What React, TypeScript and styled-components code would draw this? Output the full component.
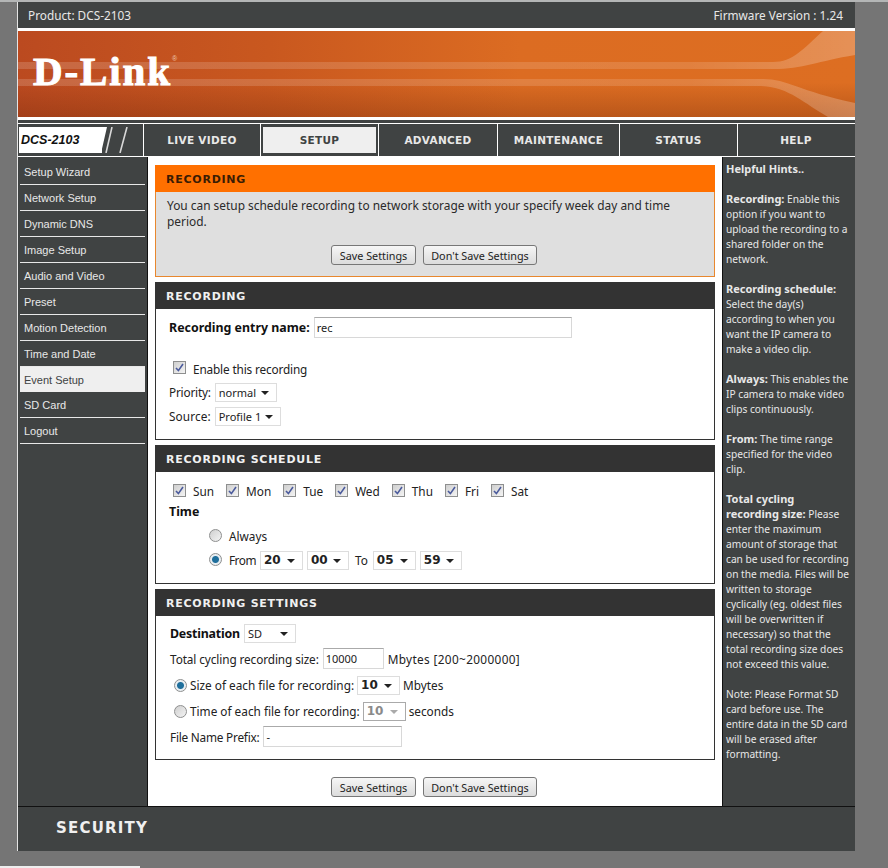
import styled, { createGlobalStyle } from "styled-components";

const GlobalStyle = createGlobalStyle`
  html, body {
    margin: 0;
    padding: 0;
    background: #757575;
  }
  * {
    box-sizing: border-box;
  }
`;

const bodyFont = `"Noto Sans", "DejaVu Sans", sans-serif`;
const headFont = `"DejaVu Sans", Verdana, sans-serif`;

const tabs = ["LIVE VIDEO", "SETUP", "ADVANCED", "MAINTENANCE", "STATUS", "HELP"];
const tabWidths = [117, 118, 119, 122, 118, 116];
const menu = [
  "Setup Wizard",
  "Network Setup",
  "Dynamic DNS",
  "Image Setup",
  "Audio and Video",
  "Preset",
  "Motion Detection",
  "Time and Date",
  "Event Setup",
  "SD Card",
  "Logout",
];
const days = ["Sun", "Mon", "Tue", "Wed", "Thu", "Fri", "Sat"];

const Checkbox = () => (
  <CheckBox>
    <svg width="9" height="9" viewBox="0 0 9 9">
      <path d="M1 5 L3.4 7.6 L8 1" fill="none" stroke="#4a5a9c" strokeWidth="1.6" />
    </svg>
  </CheckBox>
);

const Select = ({ value, bold, disabled, width }: { value: string; bold?: boolean; disabled?: boolean; width: number }) => (
  <SelectBox $bold={bold} $disabled={disabled} $width={width}>
    {value}
  </SelectBox>
);

const Buttons = () => (
  <ButtonRow>
    <Button $width={85}>Save Settings</Button>
    <Button $width={114}>Don't Save Settings</Button>
  </ButtonRow>
);

const App = () => {
  return (
    <>
      <GlobalStyle />
      <Page>
        <Frame>
          <TopBar>
            <span>Product: DCS-2103</span>
            <span>Firmware Version : 1.24</span>
          </TopBar>
          <Banner>
            <BannerArt viewBox="0 0 837 86" preserveAspectRatio="none">
              <defs>
                <linearGradient id="fade" x1="0" x2="1" y1="0" y2="0">
                  <stop offset="0" stopColor="#fff" stopOpacity="0.16" />
                  <stop offset="0.8" stopColor="#fff" stopOpacity="0.13" />
                  <stop offset="1" stopColor="#fff" stopOpacity="0.24" />
                </linearGradient>
                <linearGradient id="shade" x1="0" x2="0" y1="0" y2="1">
                  <stop offset="0.6" stopColor="#6a2408" stopOpacity="0" />
                  <stop offset="1" stopColor="#6a2408" stopOpacity="0.3" />
                </linearGradient>
              </defs>
              <rect width="837" height="86" fill="url(#shade)" />
              <path d="M0 31 H755 C775 31 785 18 805 0 H837 V24 C800 30 785 38 755 38 H0 Z" fill="url(#fade)" />
              <path d="M0 48 H745 C770 48 780 60 837 72 V86 H810 C785 72 770 55 740 55 H0 Z" fill="url(#fade)" />
            </BannerArt>
            <Logo>
              D-Link<sup>®</sup>
            </Logo>
          </Banner>
          <Divider />
          <Nav>
            <ModelCell>
              <ModelName>DCS-2103</ModelName>
              <svg width="28" height="26" viewBox="0 0 28 26">
                <path d="M5 0 L-1 26 H0 V0 Z" fill="#fff" />
                <path d="M10 0 L4 26 M25 0 L18 26" stroke="#d8d8d8" strokeWidth="1.6" fill="none" />
              </svg>
            </ModelCell>
            {tabs.map((t, i) => (
              <Tab key={t} style={{ width: tabWidths[i] }} $active={t === "SETUP"}>
                <span>{t}</span>
              </Tab>
            ))}
          </Nav>
          <Body>
            <Sidebar>
              {menu.map((m) => (
                <MenuItem key={m} $active={m === "Event Setup"}>
                  {m}
                </MenuItem>
              ))}
            </Sidebar>
            <Main>
              <IntroPanel>
                <IntroHead>RECORDING</IntroHead>
                <IntroText>
                  You can setup schedule recording to network storage with your specify week day and time
                  <br />
                  period.
                </IntroText>
                <Buttons />
              </IntroPanel>

              <Panel>
                <PanelHead>RECORDING</PanelHead>
                <EntryBody>
                  <Row>
                    <Bold>Recording entry name:</Bold>
                    <TextInput $width={258} defaultValue="rec" />
                  </Row>
                  <EnableRow>
                    <Checkbox />
                    <Label $spacing={-0.15}>Enable this recording</Label>
                  </EnableRow>
                  <Row>
                    <Label $spacing={-0.2}>Priority:</Label>
                    <Select value="normal" width={62} />
                  </Row>
                  <Row>
                    <Label $spacing={0.1}>Source:</Label>
                    <Select value="Profile 1" width={66} />
                  </Row>
                </EntryBody>
              </Panel>

              <Panel>
                <PanelHead>RECORDING SCHEDULE</PanelHead>
                <ScheduleBody>
                  <DayRow>
                    {days.map((d) => (
                      <Day key={d}>
                        <Checkbox />
                        <span>{d}</span>
                      </Day>
                    ))}
                  </DayRow>
                  <TimeLabel>Time</TimeLabel>
                  <TimeRow>
                    <TimeRadio />
                    <span>Always</span>
                  </TimeRow>
                  <TimeRow>
                    <TimeRadio $on />
                    <Label $spacing={-0.5}>From</Label>
                    <Select value="20" bold width={43} />
                    <Select value="00" bold width={42} />
                    <ToLabel>To</ToLabel>
                    <Select value="05" bold width={43} />
                    <Select value="59" bold width={42} />
                  </TimeRow>
                </ScheduleBody>
              </Panel>

              <Panel>
                <PanelHead>RECORDING SETTINGS</PanelHead>
                <SettingsBody>
                  <SettingsRow>
                    <Bold $spacing={-0.2}>Destination</Bold>
                    <Select value="SD" width={52} />
                  </SettingsRow>
                  <SettingsRow>
                    <Label $spacing={-0.1}>Total cycling recording size:</Label>
                    <TextInput $width={61} defaultValue="10000" />
                    <Label $spacing={0.35}>Mbytes [200~2000000]</Label>
                  </SettingsRow>
                  <RadioRow>
                    <Radio $on />
                    <span>Size of each file for recording:</span>
                    <Select value="10" bold width={43} />
                    <span>Mbytes</span>
                  </RadioRow>
                  <RadioRow>
                    <Radio />
                    <span>Time of each file for recording:</span>
                    <Select value="10" bold disabled width={43} />
                    <span>seconds</span>
                  </RadioRow>
                  <SettingsRow>
                    <Label $spacing={-0.22}>File Name Prefix:</Label>
                    <TextInput $width={139} defaultValue="-" />
                  </SettingsRow>
                </SettingsBody>
              </Panel>

              <BottomButtons>
                <Buttons />
              </BottomButtons>
            </Main>
            <Hints>
              <strong>Helpful Hints..</strong>
              <br />
              <br />
              <strong>Recording:</strong> Enable this
              <br />
              option if you want to
              <br />
              upload the recording to a
              <br />
              shared folder on the
              <br />
              network.
              <br />
              <br />
              <strong>Recording schedule:</strong>
              <br />
              Select the day(s)
              <br />
              according to when you
              <br />
              want the IP camera to
              <br />
              make a video clip.
              <br />
              <br />
              <strong>Always:</strong> This enables the
              <br />
              IP camera to make video
              <br />
              clips continuously.
              <br />
              <br />
              <strong>From:</strong> The time range
              <br />
              specified for the video
              <br />
              clip.
              <br />
              <br />
              <strong>Total cycling</strong>
              <br />
              <strong>recording size:</strong> Please
              <br />
              enter the maximum
              <br />
              amount of storage that
              <br />
              can be used for recording
              <br />
              on the media. Files will be
              <br />
              written to storage
              <br />
              cyclically (eg. oldest files
              <br />
              will be overwritten if
              <br />
              necessary) so that the
              <br />
              total recording size does
              <br />
              not exceed this value.
              <br />
              <br />
              Note: Please Format SD
              <br />
              card before use. The
              <br />
              entire data in the SD card
              <br />
              will be erased after
              <br />
              formatting.
            </Hints>
          </Body>
          <Footer>SECURITY</Footer>
        </Frame>
        <BottomStrip />
      </Page>
    </>
  );
};

const Page = styled.div`
  width: 888px;
  height: 868px;
  background: #757575;
  border-top: 2px solid #b4b6b6;
  overflow: hidden;
  font-family: ${bodyFont};
  font-size: 11.8px;
  color: #222;
`;

const Frame = styled.div`
  width: 838px;
  margin-left: 17px;
  background: #fff;
  border-left: 1px solid #e4e4e4;
`;

const TopBar = styled.div`
  height: 26px;
  padding: 0 12px 0 10px;
  display: flex;
  align-items: center;
  justify-content: space-between;
  background: #404343;
  color: #e8e8e8;
  font-size: 11.8px;
`;

const Banner = styled.div`
  position: relative;
  height: 86px;
  margin-top: 3px;
  padding: 18px 0 0 15px;
  background: linear-gradient(90deg, #bb4a20 0%, #c9581f 30%, #dc6c22 60%, #dd6e22 100%);
`;

const BannerArt = styled.svg`
  position: absolute;
  inset: 0;
  width: 100%;
  height: 100%;
`;

const Logo = styled.div`
  position: relative;
  font-family: "Liberation Serif", serif;
  font-weight: 700;
  font-size: 41px;
  line-height: 44px;
  letter-spacing: 1.9px;
  color: #fff;
  -webkit-text-stroke: 1px #fff;

  sup {
    font-family: "Liberation Sans", sans-serif;
    font-size: 7px;
    font-weight: 400;
    letter-spacing: 0;
    vertical-align: 24px;
    line-height: 0;
    -webkit-text-stroke: 0;
    color: #f0c9ad;
  }
`;

const Divider = styled.div`
  height: 3px;
  margin-top: 3px;
  background: #404343;
`;

const Nav = styled.div`
  display: flex;
  height: 34px;
  border-top: 1px solid #fff;
  border-bottom: 1px solid #fff;
  background: #404343;
`;

const ModelCell = styled.div`
  width: 126px;
  flex: none;
  display: flex;
  align-items: center;
  padding: 0 0 0 1px;
  border-right: 1px solid #fff;

  svg {
    flex: none;
  }
`;

const ModelName = styled.div`
  width: 83px;
  height: 26px;
  padding-left: 2px;
  background: #fff;
  color: #111;
  font-family: "Liberation Sans", Arial, sans-serif;
  font-weight: 700;
  font-style: italic;
  font-size: 12.5px;
  line-height: 26px;
`;

const Tab = styled.div<{ $active?: boolean }>`
  flex: none;
  display: flex;
  align-items: center;
  justify-content: center;
  border-right: 1px solid #fff;
  font-family: ${headFont};
  font-weight: 700;
  font-size: 10.5px;
  letter-spacing: 0.3px;
  color: ${(p) => (p.$active ? "#404343" : "#e8e8e8")};
  padding: 0 2px;

  span {
    display: flex;
    align-items: center;
    justify-content: center;
    width: 100%;
    height: 26px;
    background: ${(p) => (p.$active ? "#efefef" : "transparent")};
  }

  &:last-child {
    border-right: none;
  }
`;

const Body = styled.div`
  display: flex;
  height: 650px;
  border-bottom: 1px solid #111;
`;

const Sidebar = styled.div`
  width: 130px;
  flex: none;
  padding: 2px 2px 0 2px;
  background: #404343;
  border-right: 1px solid #111;
`;

const MenuItem = styled.div<{ $active?: boolean }>`
  height: ${(p) => (p.$active ? "25px" : "26px")};
  padding-left: 4px;
  line-height: 26px;
  font-family: "Liberation Sans", Arial, sans-serif;
  font-size: 11px;
  color: ${(p) => (p.$active ? "#404343" : "#e8e8e8")};
  background: ${(p) => (p.$active ? "#efefef" : "transparent")};
  border-bottom: ${(p) => (p.$active ? "none" : "1px solid #e8e8e8")};
`;

const Main = styled.div`
  width: 574px;
  flex: none;
  padding: 8px 7px 0 7px;
  background: #fff;
  display: flex;
  flex-direction: column;
`;

const IntroPanel = styled.div`
  height: 112px;
  background: #dfdfdf;
  border: 1px solid #e8872e;
  border-top: none;
`;

const IntroHead = styled.div`
  height: 27px;
  margin: 0 -1px;
  padding-left: 11px;
  background: #ff7000;
  color: #3a1c04;
  font-family: ${headFont};
  font-weight: 700;
  font-size: 11px;
  letter-spacing: 0.75px;
  line-height: 30px;
`;

const IntroText = styled.div`
  height: 53px;
  padding: 5px 0 0 11px;
  line-height: 16px;
  font-size: 11.9px;
  color: #2a2a2a;
`;

const ButtonRow = styled.div`
  display: flex;
  justify-content: center;
  gap: 7px;
  padding-right: 2px;
`;

const Button = styled.button<{ $width: number }>`
  width: ${(p) => p.$width}px;
  height: 20px;
  padding: 0;
  border: 1px solid #777;
  border-radius: 3px;
  background: linear-gradient(#f6f6f6, #dcdcdc);
  font-family: ${bodyFont};
  font-size: 10.8px;
  color: #222;
`;

const Panel = styled.div`
  margin-top: 5px;
  border: 1px solid #333;
  border-top: none;
  background: #fff;
`;

const PanelHead = styled.div`
  height: 27px;
  margin: 0 -1px;
  padding-left: 11px;
  background: #333;
  color: #f0f0f0;
  font-family: ${headFont};
  font-weight: 700;
  font-size: 11px;
  letter-spacing: 0.75px;
  line-height: 30px;
`;

const Row = styled.div`
  display: flex;
  align-items: center;
  gap: 4px;
  height: 24px;
`;

const Label = styled.span<{ $spacing?: number }>`
  letter-spacing: ${(p) => p.$spacing ?? 0}px;
`;

const Bold = styled(Label)`
  font-weight: 700;
  font-size: 12.4px;
  color: #111;
`;

const ToLabel = styled.span`
  padding: 0 1px 0 2px;
`;

const EntryBody = styled.div`
  height: 130px;
  padding: 6px 0 0 13px;
`;

const EnableRow = styled(Row)`
  margin-top: 18px;
  height: 23px;
  padding-left: 4px;
  gap: 7px;
`;

const ScheduleBody = styled.div`
  height: 111px;
  padding: 7px 0 0 13px;
`;

const DayRow = styled(Row)`
  gap: 12px;
  padding-left: 4px;
`;

const Day = styled.div`
  display: flex;
  align-items: center;
  gap: 7px;
`;

const TimeLabel = styled(Bold)`
  display: block;
  height: 21px;
  line-height: 18px;
`;

const TimeRow = styled(Row)`
  padding-left: 40px;
  gap: 4px;
`;

const SettingsBody = styled.div`
  height: 143px;
  padding: 5px 0 0 14px;
`;

const SettingsRow = styled(Row)`
  height: 25px;
`;

const RadioRow = styled(Row)`
  padding-left: 4px;
  height: 26px;
  gap: 3px;

  &:nth-child(3) {
    margin-top: 1px;
  }
`;

const CheckBox = styled.span`
  flex: none;
  width: 13px;
  height: 13px;
  margin-bottom: 2px;
  display: inline-flex;
  align-items: center;
  justify-content: center;
  border: 1px solid #8e8f8f;
  background: linear-gradient(135deg, #cfcfcf, #f4f4f4);
`;

const Radio = styled.span<{ $on?: boolean }>`
  flex: none;
  width: 13px;
  height: 13px;
  border-radius: 50%;
  border: 1px solid #8e8f8f;
  background: ${(p) =>
    p.$on
      ? "radial-gradient(circle, #1f6f9c 0 3px, #e8eef2 4px)"
      : "linear-gradient(135deg, #cfcfcf, #f4f4f4)"};
`;

const TimeRadio = styled(Radio)`
  margin-right: 3px;
  margin-bottom: 1px;
`;

const SelectBox = styled.span<{ $bold?: boolean; $disabled?: boolean; $width: number }>`
  position: relative;
  flex: none;
  display: inline-flex;
  align-items: center;
  width: ${(p) => p.$width}px;
  height: 19px;
  padding-left: 3px;
  border: 1px solid ${(p) => (p.$disabled ? "#aaa" : "#ddd")};
  background: #fff;
  font-family: ${(p) => (p.$bold ? headFont : bodyFont)};
  font-size: ${(p) => (p.$bold ? "12px" : "11px")};
  font-weight: ${(p) => (p.$bold ? 700 : 400)};
  color: ${(p) => (p.$disabled ? "#8a8a8a" : "#222")};

  &::after {
    content: "";
    position: absolute;
    right: 7px;
    top: 7px;
    border: 4px solid transparent;
    border-top-color: ${(p) => (p.$disabled ? "#aaa" : "#222")};
    border-bottom: none;
  }
`;

const TextInput = styled.input<{ $width: number }>`
  flex: none;
  width: ${(p) => p.$width}px;
  height: 21px;
  padding: 0 2px;
  border: 1px solid #d8d8d8;
  border-top-color: #aaa;
  background: #fff;
  font-family: ${bodyFont};
  font-size: 11px;
  color: #222;
`;

const BottomButtons = styled.div`
  margin-top: 17px;
`;

const Hints = styled.div`
  flex: 1;
  padding: 5px 0 0 3px;
  background: #404343;
  border-left: 1px solid #111;
  color: #e8e8e8;
  font-size: 10.2px;
  line-height: 15px;
  white-space: nowrap;
  overflow: hidden;

  strong {
    font-size: 11px;
    line-height: 1;
  }
`;

const Footer = styled.div`
  height: 44px;
  padding-left: 38px;
  background: #404343;
  color: #f0f0f0;
  font-family: "DejaVu Sans", sans-serif;
  font-weight: 700;
  font-size: 15px;
  letter-spacing: 1.2px;
  line-height: 43px;
`;

const BottomStrip = styled.div`
  width: 140px;
  height: 2px;
  margin-top: 15px;
  background: #eee;
`;

export default App;
